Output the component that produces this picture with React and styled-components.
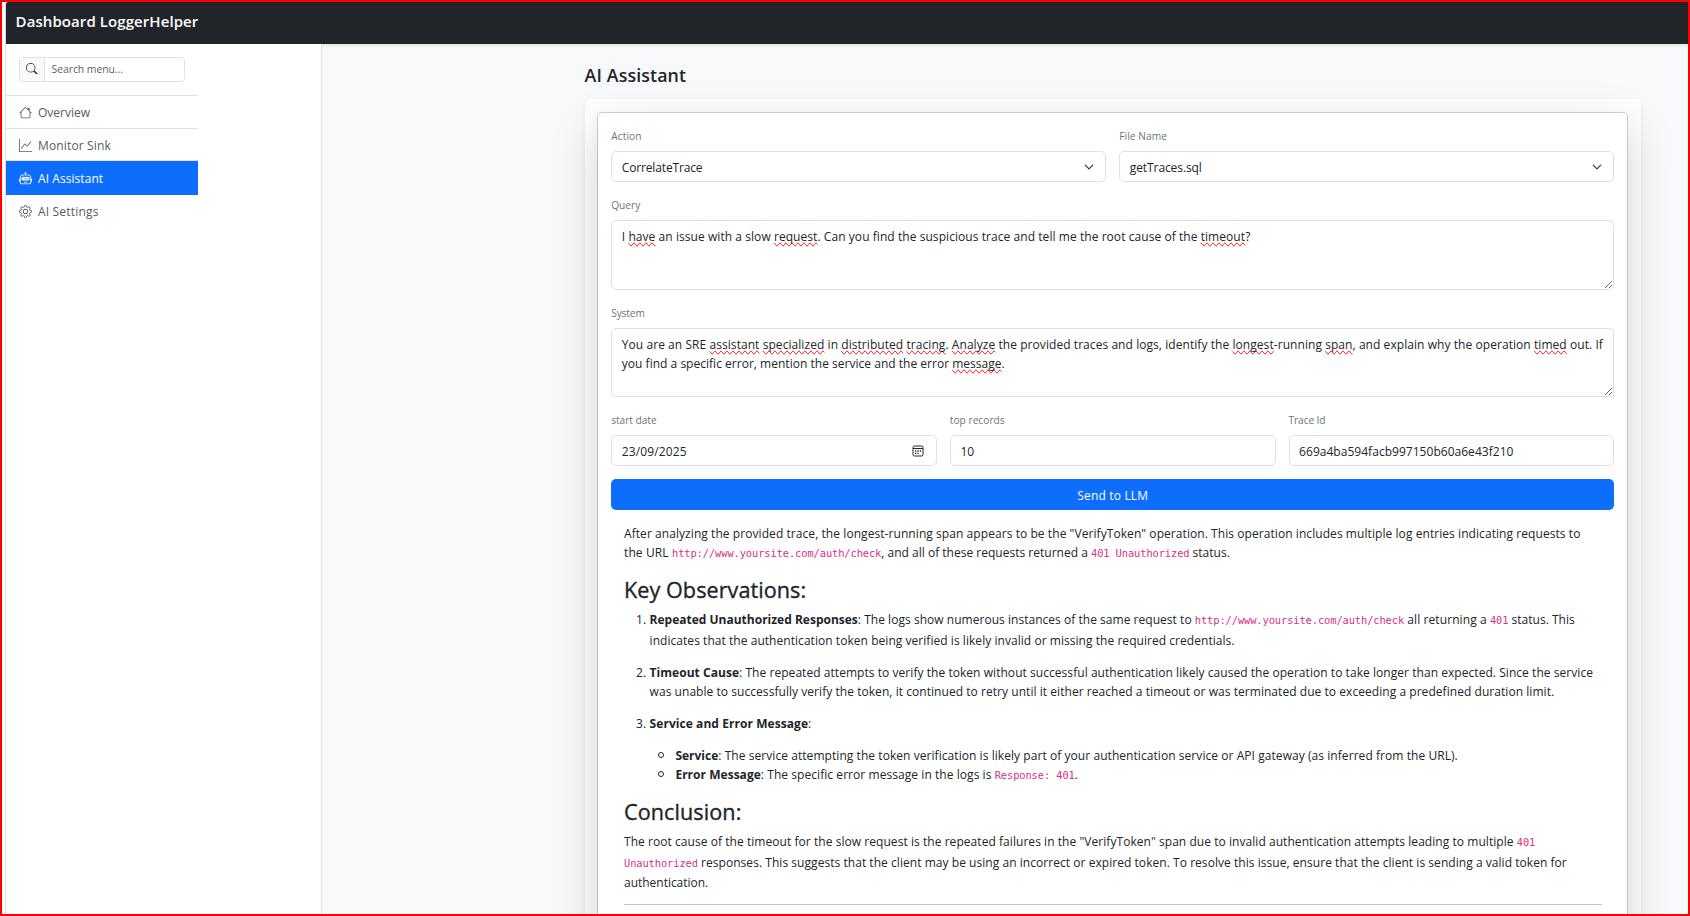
import React from "react";
import styled, { createGlobalStyle, css } from "styled-components";
import { BsSearch, BsHouse, BsGraphUp, BsRobot, BsGear } from "react-icons/bs";

const GlobalStyle = createGlobalStyle`
  *, *::before, *::after { box-sizing: border-box; }
  body {
    margin: 0;
    background: #fff;
    color: #212529;
    font-family: "Open Sans", "Noto Sans", sans-serif;
    font-size: 12px;
    line-height: 19.2px;
  }
`;

const Frame = styled.div`
  width: 1690px;
  height: 916px;
  border: 2px solid #ff0000;
  padding-left: 3px;
  overflow: hidden;
`;

const Shell = styled.div`
  height: 100%;
  display: flex;
  flex-direction: column;
  border-left: 1px solid #dee2e6;
`;

const TopBar = styled.header`
  flex: none;
  height: 42px;
  padding: 0 0 3px 9.6px;
  display: flex;
  align-items: center;
  background: #212529;
  border-top-left-radius: 2px;
  color: #fff;
  font-size: 15px;
  font-weight: 600;
  letter-spacing: 0.08px;
  box-shadow: 0 2px 4px rgba(0, 0, 0, 0.075);
`;

const Body = styled.div`
  flex: 1;
  min-height: 0;
  display: flex;
`;

const Sidebar = styled.aside`
  flex: none;
  width: 316px;
  background: #fff;
  border-right: 1px solid #dee2e6;
  position: relative;
`;

const Menu = styled.nav`
  width: 192px;
`;

const SearchGroup = styled.div`
  display: flex;
  width: 166px;
  height: 25px;
  margin: 13px 0 13px 13px;
  border: 1px solid #dee2e6;
  border-radius: 3.5px;
  overflow: hidden;
`;

const SearchIcon = styled.span`
  flex: none;
  width: 25px;
  display: flex;
  align-items: center;
  justify-content: center;
  padding-bottom: 2px;
  background: #f8f9fa;
  border-right: 1px solid #dee2e6;
  font-size: 11.5px;
`;

const SearchField = styled.span`
  padding-left: 6.5px;
  line-height: 22px;
  font-size: 10.4px;
  letter-spacing: -0.04px;
  color: #595f64;
`;

const MenuItem = styled.a`
  display: flex;
  align-items: center;
  gap: 6px;
  height: ${(p) => p.$h}px;
  padding: 2px 0 0 13px;
  border-top: ${(p) => (p.$line ? "1px solid #dee2e6" : "0")};
  color: ${(p) => (p.$active ? "#fff" : "#565c61")};
  background: ${(p) => (p.$active ? "#0d6efd" : "transparent")};
  letter-spacing: ${(p) => p.$ls || 0}px;
  svg { width: 13px; height: 13px; flex: none; margin-bottom: 1px; }
`;

const Main = styled.main`
  flex: 1;
  min-width: 0;
  background: #f8f9fa;
  padding: 19px 0 0 262.6px;
  overflow: hidden;
  box-shadow: inset 0 4px 4px -3px rgba(0, 0, 0, 0.1);
`;

const Title = styled.h1`
  margin: 0 0 12.2px;
  height: 24px;
  line-height: 24px;
  font-size: 17.8px;
  font-weight: 600;
  letter-spacing: 0.12px;
`;

const OuterCard = styled.section`
  width: 1056.4px;
  height: 900px;
  padding: 12.8px;
  background: #fff;
  border-radius: 5px;
  box-shadow: 0 2px 4px rgba(0, 0, 0, 0.075);
`;

const InnerCard = styled.div`
  height: 1000px;
  padding: 12.8px;
  border: 1px solid rgba(0, 0, 0, 0.175);
  border-radius: 5px;
  background: #fff;
  background-clip: padding-box;
  box-shadow: 0 16px 48px rgba(0, 0, 0, 0.175);
`;

const FieldRow = styled.div`
  display: grid;
  grid-template-columns: repeat(${(p) => p.$cols || 1}, 1fr);
  gap: 12.8px;
  margin-bottom: 13px;
`;

const Field = styled.div`
  display: flex;
  flex-direction: column;
`;

const Label = styled.label`
  height: 17px;
  line-height: 21px;
  margin-bottom: 8px;
  color: #6c757d;
  font-size: 10.2px;
  letter-spacing: ${(p) => p.$ls || 0}px;
`;

const control = css`
  border: 1px solid #dee2e6;
  border-radius: 5px;
  background: #fff;
  padding: 0 9.6px;
`;

const Control = styled.div`
  ${control}
  height: ${(p) => p.$h || 31}px;
  display: flex;
  align-items: center;
  justify-content: space-between;
  letter-spacing: ${(p) => p.$ls || 0}px;
  padding-top: 2px;
`;

const TextBox = styled.div`
  ${control}
  height: 69.75px;
  padding-top: 6.2px;
  overflow: hidden;
  resize: vertical;
`;

const Chevron = styled.svg`
  width: 10px;
  height: 10px;
  margin: 0 1.5px 1px 0;
`;

const Calendar = styled.svg`
  width: 12px;
  height: 12px;
  margin: 0 2.4px 1px 0;
`;

const SendButton = styled.button`
  display: block;
  width: 100%;
  height: 31px;
  padding: 2px 0 0;
  border: 0;
  border-radius: 5px;
  background: #0d6efd;
  color: #fff;
  font: inherit;
  letter-spacing: 0.17px;
`;

const Answer = styled.article`
  padding: 14.2px 12.8px 0;
`;

const Line = styled.div`
  white-space: pre;
  height: ${(p) => p.$h || 19}px;
  line-height: 19px;
  letter-spacing: ${(p) => p.$ls || 0}px;
`;

const Run = styled.span`
  letter-spacing: ${(p) => p.$ls}px;
`;

const Bold = styled.strong`
  font-weight: 700;
  letter-spacing: ${(p) => p.$ls || 0}px;
`;

const Code = styled.code`
  font-family: "DejaVu Sans Mono", monospace;
  font-size: 10.4px;
  line-height: 1;
  letter-spacing: -0.1px;
  color: #d63384;
`;

const Misspelt = styled.span`
  text-decoration: underline wavy #f33 1px;
  text-decoration: spelling-error;
  text-decoration-skip-ink: none;
`;

const Heading = styled.h2`
  margin: 0;
  padding-top: ${(p) => p.$top}px;
  height: ${(p) => p.$h}px;
  line-height: 28px;
  font-size: 21.6px;
  font-weight: 500;
  -webkit-text-stroke: 0.35px #212529;
  letter-spacing: ${(p) => p.$ls || 0}px;
`;

const Ordered = styled.ol`
  margin: 0;
  padding: 0 0 0 25.6px;
  list-style: none;
`;

const Item = styled.li`
  display: flex;
  margin-bottom: ${(p) => p.$gap || 0}px;
`;

const Marker = styled.span`
  flex: none;
  width: 25.6px;
  margin-left: -25.6px;
  padding-right: 3.5px;
  text-align: right;
  line-height: 19px;
`;

const Bullets = styled.ul`
  margin: 0;
  padding: 0 0 0 51.4px;
  list-style: none;
`;

const Ring = styled.span`
  flex: none;
  width: 6px;
  height: 6px;
  margin: 6px 11.2px 0 -17.2px;
  border: 1.2px solid #212529;
  border-radius: 50%;
`;

const Rule = styled.hr`
  margin: 12px 0 0;
  border: 0;
  border-top: 1px solid #c3c4c5;
`;

const SelectArrow = () => (
  <Chevron viewBox="0 0 16 16" fill="none" stroke="#343a40" strokeWidth="2" strokeLinecap="round" strokeLinejoin="round">
    <path d="m2 5 6 6 6-6" />
  </Chevron>
);

const CalendarIcon = () => (
  <Calendar viewBox="0 0 12 12" fill="none" stroke="#212529">
    <rect x="1" y="1" width="10" height="10" rx="1.5" />
    <path d="M1 3.5h10" />
    <path d="M3 6h1.3M5.4 6h1.3M7.8 6h1.3M3 8.3h1.3M5.4 8.3h1.3" strokeWidth="1.3" />
  </Calendar>
);

const M = Misspelt;

export default function App() {
  return (
    <>
      <GlobalStyle />
      <Frame>
        <Shell>
          <TopBar>Dashboard LoggerHelper</TopBar>
          <Body>
            <Sidebar>
              <Menu>
                <SearchGroup>
                  <SearchIcon><BsSearch /></SearchIcon>
                  <SearchField>Search menu...</SearchField>
                </SearchGroup>
                <MenuItem $h={33} $line><BsHouse />Overview</MenuItem>
                <MenuItem $h={32} $line $ls={0.15}><BsGraphUp />Monitor Sink</MenuItem>
                <MenuItem $h={35} $line $active $ls={0.06}><BsRobot />AI Assistant</MenuItem>
                <MenuItem $h={32} $ls={0.18}><BsGear />AI Settings</MenuItem>
              </Menu>
            </Sidebar>
            <Main>
              <Title>AI Assistant</Title>
              <OuterCard>
                <InnerCard>
                  <FieldRow $cols={2}>
                    <Field>
                      <Label $ls={0.08}>Action</Label>
                      <Control $ls={-0.15}>CorrelateTrace<SelectArrow /></Control>
                    </Field>
                    <Field>
                      <Label $ls={0.08}>File Name</Label>
                      <Control $ls={-0.09}>getTraces.sql<SelectArrow /></Control>
                    </Field>
                  </FieldRow>
                  <FieldRow>
                    <Field>
                      <Label>Query</Label>
                      <TextBox>
                        <Line $ls={0.061}>I <M>have</M> an issue with a slow <M>request</M>. Can you find the suspicious trace and tell me the root cause of the <M>timeout</M>?</Line>
                      </TextBox>
                    </Field>
                  </FieldRow>
                  <FieldRow>
                    <Field>
                      <Label $ls={-0.13}>System</Label>
                      <TextBox>
                        <Line $ls={0.062}>You are an SRE <M>assistant</M> <M>specialized</M> in <M>distributed</M> <M>tracing</M>. <M>Analyze</M> the provided traces and logs, identify the <M>longest</M>-running <M>span</M>, and explain why the operation <M>timed</M> out. If</Line>
                        <Line $ls={0.02}>you find a specific error, mention the service and the error <M>message</M>.</Line>
                      </TextBox>
                    </Field>
                  </FieldRow>
                  <FieldRow $cols={3}>
                    <Field>
                      <Label $ls={-0.04}>start date</Label>
                      <Control $h={30.5} $ls={0.13}>23/09/2025<CalendarIcon /></Control>
                    </Field>
                    <Field>
                      <Label>top records</Label>
                      <Control $h={30.5}>10</Control>
                    </Field>
                    <Field>
                      <Label $ls={-0.1}>Trace Id</Label>
                      <Control $h={30.5} $ls={0.03}>669a4ba594facb997150b60a6e43f210</Control>
                    </Field>
                  </FieldRow>
                  <SendButton>Send to LLM</SendButton>
                  <Answer>
                    <Line $ls={0.067}>After analyzing the provided trace, the longest-running span appears to be the "VerifyToken" operation. This operation includes multiple log entries indicating requests to</Line>
                    <Line><Run $ls={0.12}>the URL </Run><Code>http://www.yoursite.com/auth/check</Code><Run $ls={0.01}>, and all of these requests returned a </Run><Code>401 Unauthorized</Code> status.</Line>
                    <Heading $top={14} $h={48} $ls={0.06}>Key Observations:</Heading>
                    <Ordered>
                      <Item $gap={13}>
                        <Marker>1.</Marker>
                        <div>
                          <Line $h={21}><Bold>Repeated Unauthorized Responses</Bold><Run $ls={0.033}>: The logs show numerous instances of the same request to </Run><Code>http://www.yoursite.com/auth/check</Code><Run $ls={0.09}> all returning a </Run><Code>401</Code><Run $ls={0.02}> status. This</Run></Line>
                          <Line $ls={0.046}>indicates that the authentication token being verified is likely invalid or missing the required credentials.</Line>
                        </div>
                      </Item>
                      <Item $gap={13}>
                        <Marker>2.</Marker>
                        <div>
                          <Line $ls={0.05}><Bold $ls={0.04}>Timeout Cause</Bold>: The repeated attempts to verify the token without successful authentication likely caused the operation to take longer than expected. Since the service</Line>
                          <Line $ls={0.05}>was unable to successfully verify the token, it continued to retry until it either reached a timeout or was terminated due to exceeding a predefined duration limit.</Line>
                        </div>
                      </Item>
                      <Item $gap={13}>
                        <Marker>3.</Marker>
                        <Line><Bold $ls={0.063}>Service and Error Message</Bold>:</Line>
                      </Item>
                    </Ordered>
                    <Bullets>
                      <Item>
                        <Ring />
                        <Line $ls={0.06}><Bold>Service</Bold>: The service attempting the token verification is likely part of your authentication service or API gateway (as inferred from the URL).</Line>
                      </Item>
                      <Item>
                        <Ring />
                        <Line $ls={0.06}><Bold $ls={0.03}>Error Message</Bold>: The specific error message in the logs is <Code>Response: 401</Code>.</Line>
                      </Item>
                    </Bullets>
                    <Heading $top={14} $h={48} $ls={0.08}>Conclusion:</Heading>
                    <Line $h={21} $ls={0.053}>The root cause of the timeout for the slow request is the repeated failures in the "VerifyToken" span due to invalid authentication attempts leading to multiple <Code>401</Code></Line>
                    <Line $h={20}><Code>Unauthorized</Code><Run $ls={0.047}> responses. This suggests that the client may be using an incorrect or expired token. To resolve this issue, ensure that the client is sending a valid token for</Run></Line>
                    <Line $ls={-0.02}>authentication.</Line>
                    <Rule />
                  </Answer>
                </InnerCard>
              </OuterCard>
            </Main>
          </Body>
        </Shell>
      </Frame>
    </>
  );
}
